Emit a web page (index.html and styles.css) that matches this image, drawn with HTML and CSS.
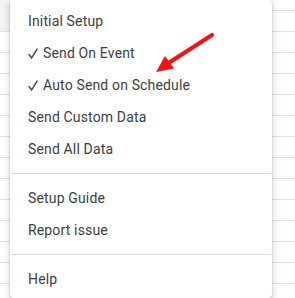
FILE: index.html
```html
<!DOCTYPE html>
<html lang="en">
<head>
    <meta charset="UTF-8">
    <title>Add-on menu</title>
    <link rel="stylesheet" href="styles.css">
</head>
<body>
    <div class="sheet">
        <div class="gutter">
            <div class="gutter-head"></div>
        </div>

        <div class="menu">
            <div class="menu-item">Initial Setup</div>
            <div class="menu-item">
                <svg class="check" width="10" height="11" viewBox="0 0 10 11"><path d="M0.8 6.2 L3.6 10 L9.4 0.6" /></svg>Send On Event
            </div>
            <div class="menu-item">
                <svg class="check" width="10" height="11" viewBox="0 0 10 11"><path d="M0.8 6.2 L3.6 10 L9.4 0.6" /></svg>Auto Send on Schedule
            </div>
            <div class="menu-item">Send Custom Data</div>
            <div class="menu-item">Send All Data</div>
            <div class="separator"></div>
            <div class="menu-item">Setup Guide</div>
            <div class="menu-item">Report issue</div>
            <div class="separator"></div>
            <div class="menu-item">Help</div>
        </div>

        <div class="gutter"></div>

        <!-- annotation arrow drawn over the menu -->
        <svg class="arrow" width="295" height="298" viewBox="0 0 295 298">
            <line x1="212" y1="35" x2="167" y2="64" stroke="#f01414" stroke-width="4.2" stroke-linecap="round" />
            <polygon points="156,72 165,56 174,68.5" fill="#f01414" />
        </svg>
    </div>
</body>
</html>
```

FILE: styles.css
```css
/* General body styling */
body {
    margin: 0;
    padding: 0;
    font-family: Roboto, "DejaVu Sans", sans-serif;
    background: #ffffff;
    overflow: hidden;
}

/* Spreadsheet behind the menu */
.sheet {
    position: relative;
    display: flex;
    height: 298px;
    background: repeating-linear-gradient(
        to bottom,
        transparent 0,
        transparent 10px,
        #e1e1e1 10px,
        #e1e1e1 11px,
        transparent 11px,
        transparent 21px
    );
}

.gutter {
    flex: 1;
}

.sheet > .gutter:first-child {
    flex: none;
    width: 10px;
}

.gutter-head {
    height: 31px;
    background: #f1f3f4;
}

/* Menu */
.menu {
    width: 262px;
    flex: none;
    padding: 5px 0 0;
    background: #ffffff;
    border-radius: 4px;
    box-shadow: 0 2px 6px 2px rgba(60, 64, 67, 0.15), 0 1px 2px rgba(60, 64, 67, 0.3);
    position: relative;
    z-index: 1;
}

.menu-item {
    height: 32px;
    line-height: 32px;
    padding-left: 18px;
    font-size: 14px;
    letter-spacing: 0.15px;
    color: #3c4043;
    white-space: nowrap;
}

.check {
    margin-right: 5px;
    vertical-align: -1px;
}

.check path {
    fill: none;
    stroke: #3c4043;
    stroke-width: 1.4;
    stroke-linejoin: round;
}

.separator {
    height: 1px;
    margin: 8px 1px;
    background: #dadce0;
}

/* Red annotation arrow */
.arrow {
    position: absolute;
    left: 0;
    top: 0;
    z-index: 2;
}
```
